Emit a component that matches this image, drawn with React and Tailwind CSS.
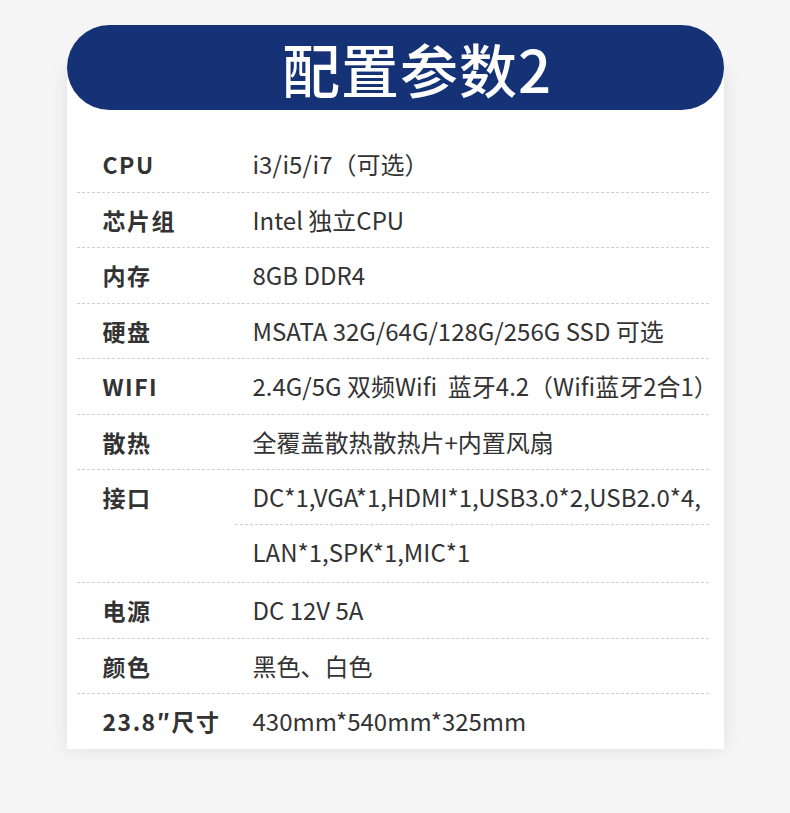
import React from "react";

const rows = [
  { label: "CPU", values: ["i3/i5/i7（可选）"] },
  { label: "芯片组", values: ["Intel 独立CPU"] },
  { label: "内存", values: ["8GB DDR4"] },
  { label: "硬盘", values: ["MSATA 32G/64G/128G/256G SSD 可选"] },
  { label: "WIFI", values: ["2.4G/5G 双频Wifi  蓝牙4.2（Wifi蓝牙2合1）"] },
  { label: "散热", values: ["全覆盖散热散热片+内置风扇"] },
  {
    label: "接口",
    values: ["DC*1,VGA*1,HDMI*1,USB3.0*2,USB2.0*4,", "LAN*1,SPK*1,MIC*1"],
  },
  { label: "电源", values: ["DC 12V 5A"] },
  { label: "颜色", values: ["黑色、白色"] },
  { label: "23.8″尺寸", values: ["430mm*540mm*325mm"] },
];

const App = () => {
  return (
    <div className="min-h-[813px] bg-[#f5f5f5] pt-[25px] font-['Noto_Sans_CJK_SC',sans-serif]">
      <div className="w-[657px] mx-auto">
        {/* Title pill */}
        <div className="relative z-10 h-[85px] rounded-full bg-[#163276] flex items-center justify-center pl-[44px]">
          <h1 className="text-white text-[58px] font-medium leading-none tracking-[1px]">
            配置参数2
          </h1>
        </div>

        {/* Spec table */}
        <div className="-mt-[42px] pt-[69px] bg-white shadow-[0_0_18px_rgba(0,0,0,0.09)] pl-[10px] pr-[15px]">
          {rows.map((row, i) => (
            <div
              key={row.label}
              className={
                "flex " +
                (i < rows.length - 1 ? "border-b border-dashed border-[#cfcfcf]" : "")
              }
            >
              <div className="w-[158px] shrink-0 pl-[26px] h-[54.5px] flex items-center text-[23px] font-bold text-[#333] tracking-[1.5px] whitespace-nowrap">
                {row.label}
              </div>
              <div className="flex-1">
                {row.values.map((v, j) => (
                  <div
                    key={j}
                    className={
                      "flex items-center pl-[18px] text-[24px] text-[#333] whitespace-pre " +
                      (j > 0 ? "h-[57.5px] pb-[3px] " : "h-[54.5px] ") +
                      (j < row.values.length - 1 ? "border-b border-dashed border-[#cfcfcf]" : "")
                    }
                  >
                    {v}
                  </div>
                ))}
              </div>
            </div>
          ))}
        </div>
      </div>
    </div>
  );
};

export default App;
